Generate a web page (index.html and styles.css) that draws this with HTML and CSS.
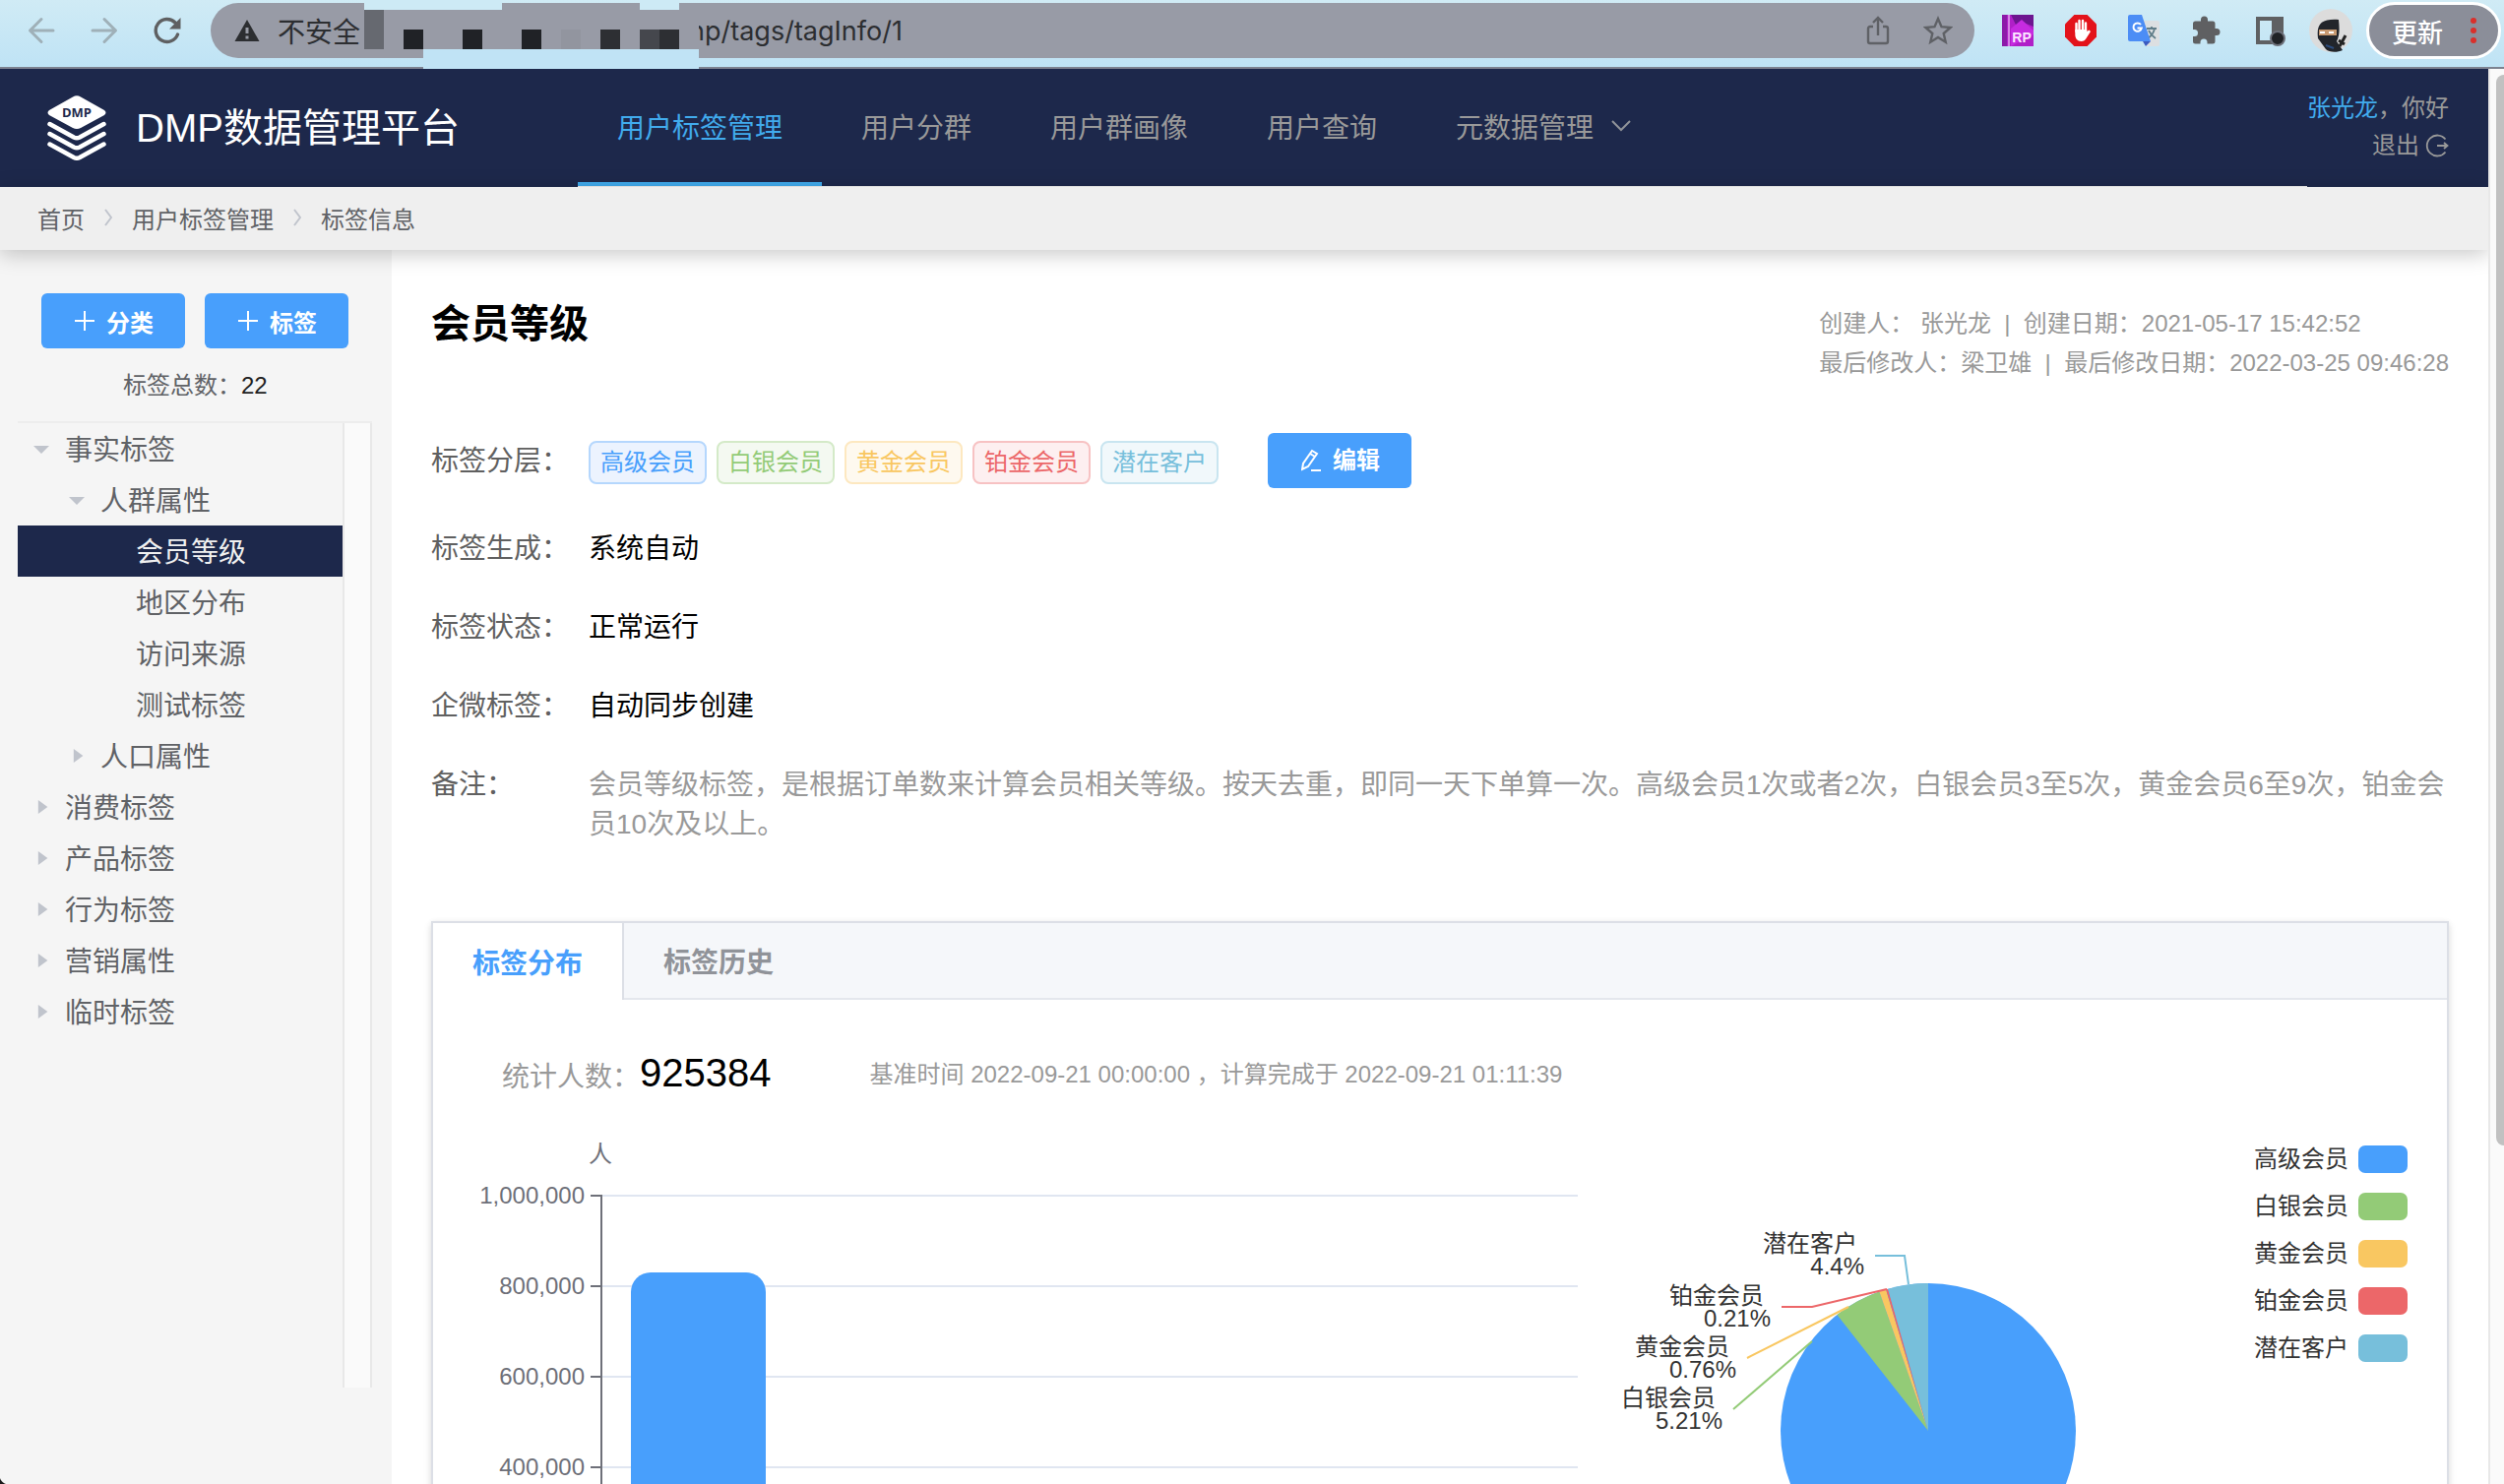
FILE: index.html
```
<!DOCTYPE html>
<html lang="zh-CN">
<head>
<meta charset="utf-8">
<meta name="viewport" content="width=device-width, initial-scale=1">
<title>DMP数据管理平台 - 标签信息</title>
<link rel="stylesheet" href="styles.css">
</head>
<body>
<div class="browser">
  <button class="tool" aria-label="后退"><svg width="28" height="28" viewBox="0 0 28 28" fill="none" stroke="#9fb0b8" stroke-width="3" stroke-linecap="round" stroke-linejoin="round"><path d="M26 14H3M14 2.500L2.500 14L14 25.500"/></svg></button>
  <button class="tool" aria-label="前进"><svg width="28" height="28" viewBox="0 0 28 28" fill="none" stroke="#9fb0b8" stroke-width="3" stroke-linecap="round" stroke-linejoin="round"><path d="M2 14H25M14 2.500L25.500 14L14 25.500"/></svg></button>
  <button class="tool" aria-label="刷新"><svg width="28" height="28" viewBox="0 0 28 28"><path d="M24.500 18A11.500 11.500 0 1 1 22 6" fill="none" stroke="#5f6062" stroke-width="3.400" stroke-linecap="round"/><path d="M27.500 1V12.500H16Z" fill="#5f6062"/></svg></button>
  <div class="omnibox">
    <svg width="26" height="24" viewBox="0 0 26 24"><path d="M13 1L25.500 23H.500Z" fill="#2c2e31"/><path d="M13 9V15M13 17.500V20.500" stroke="#989ba6" stroke-width="3"/></svg>
    <span class="insecure">不安全</span>
    <input class="url" type="text" aria-label="地址" value="np/tags/tagInfo/1">
    <button class="tool" aria-label="分享"><svg width="24" height="30" viewBox="0 0 24 30" fill="none" stroke="#5f6166" stroke-width="2.400"><path d="M7 11H4a2 2 0 0 0-2 2v13a2 2 0 0 0 2 2h16a2 2 0 0 0 2-2V13a2 2 0 0 0-2-2h-3M12 20V2M7 7l5-5 5 5"/></svg></button>
    <button class="tool" aria-label="收藏"><svg width="30" height="30" viewBox="0 0 30 30" fill="none" stroke="#5f6166" stroke-width="2.400"><path d="M15 3l3.500 8.200 9 .800-6.800 6 2 8.700L15 22l-7.700 4.700 2-8.700-6.800-6 9-.800z"/></svg></button>
  </div>
  <div class="extensions">
    <button class="tool" aria-label="RP"><svg width="32" height="32" viewBox="0 0 32 32"><path d="M0 0H32V32H0z" fill="#b01fc8"/><path d="M9 0H32V12L22 8L16 14Z" fill="#6d1590"/><path d="M9 14L20 5L32 16V20L9 32Z" fill="#c62be0"/><path d="M0 0H5V32H0z" fill="#8c1aa8"/><path d="M7 0V32" stroke="#e5a5ef" stroke-width="1.500"/><text class="rp-text" x="20" y="28" text-anchor="middle">RP</text></svg></button>
    <button class="tool" aria-label="广告拦截"><svg width="32" height="32" viewBox="0 0 32 32"><path d="M9.400 0h13.200L32 9.400v13.200L22.600 32H9.400L0 22.600V9.400z" fill="#e3131b"/><path d="M11.500 9v8M14.500 6v11M18 6V17M21 8.500V18" stroke="#fff" stroke-width="2.400" stroke-linecap="round"/><path d="M10.300 15h11.900v2l2.300-1.500 1.500 1.500-4.500 7c-1.200 2-2.500 3-5 3-4 0-6.200-3-6.200-7z" fill="#fff"/></svg></button>
    <button class="tool" aria-label="翻译"><svg width="32" height="32" viewBox="0 0 32 32"><path d="M12 6H30a2 2 0 0 1 2 2V30a2 2 0 0 1-2 2H18z" fill="#dcdfe1"/><path d="M19 14h10M24 12v2M27 14c-1 5-4 8-7 10M21 16c2 4 4 6 7 8" stroke="#607d88" stroke-width="1.800" fill="none"/><path d="M15 27h8l-5 5z" fill="#3a5bc0"/><path d="M2 0H14L23 27H2a2 2 0 0 1-2-2V2a2 2 0 0 1 2-2z" fill="#4c8df5"/><path d="M13 10a4.200 4.200 0 1 0 .800 3.500H9.500" stroke="#fff" stroke-width="2" fill="none"/></svg></button>
    <button class="tool" aria-label="扩展程序"><svg width="32" height="32" viewBox="0 0 32 32"><path d="M10 6.500V5a3.500 3.500 0 0 1 7 0v1.500h5a2.500 2.500 0 0 1 2.500 2.500v5H26a3.500 3.500 0 0 1 0 7h-1.500v6a2.500 2.500 0 0 1-2.500 2.500h-5.500V28a3.500 3.500 0 0 0-7 0v1.500H4.500A2.500 2.500 0 0 1 2 27v-5h1.500a3.500 3.500 0 0 0 0-7H2V9a2.500 2.500 0 0 1 2.500-2.500z" fill="#5f6062"/></svg></button>
    <button class="tool" aria-label="侧边栏"><svg width="32" height="32" viewBox="0 0 32 32"><path d="M4 4H26V28H4z" fill="none" stroke="#5f6062" stroke-width="4"/><path d="M18 2H30V20H18z" fill="#5f6062"/><circle cx="24" cy="24" r="7" fill="#202226" stroke="#6d707a" stroke-width="2"/></svg></button>
    <button class="tool" aria-label="用户"><svg width="44" height="44" viewBox="0 0 44 44"><circle cx="22" cy="22" r="22" fill="#dcdcdc"/><path d="M9 30C7 14 14 10 30 11C31 20 31 27 28 33L34 42C28 45 20 44 17 41z" fill="#22252b"/><path d="M10 21H28V27H10z" fill="#c89a72"/><path d="M11 23h5v2h-5zM20 23h5v2h-5z" fill="#fff"/><path d="M17 37l8 3" stroke="#2b4a7a" stroke-width="2"/><path d="M31 38L37 27M30 32l6 4" stroke="#222" stroke-width="3"/></svg></button>
  </div>
  <button class="update">更新<svg width="6" height="26" viewBox="0 0 6 26" fill="#d9302b"><circle cx="3" cy="3" r="3"/><circle cx="3" cy="13" r="3"/><circle cx="3" cy="23" r="3"/></svg></button>
  <svg class="mosaic" width="340" height="70" viewBox="370 0 340 70">
    <path d="M370 0H510V10H370zM650 0H690V10H650z" fill="#cdeaf5"/>
    <path d="M430 50H710V70H430z" fill="#c0e3f5"/>
    <path d="M690 10H710V50H690z" fill="#989ba6"/>
    <path d="M370 10H390V50H370z" fill="#666970"/>
    <path d="M410 30h20v20h-20zM470 30h20v20h-20zM530 30h20v20h-20z" fill="#202226"/>
    <path d="M610 30h20v20h-20zM670 30h20v20h-20z" fill="#2d2f33"/>
    <path d="M650 30h20v20h-20z" fill="#45474d"/>
    <path d="M570 30h20v20h-20z" fill="#92959f"/>
  </svg>
</div>

<div class="viewport">
<div class="page">
  <header class="header">
    <div class="brand">
      <svg width="60" height="66" viewBox="0 0 60 66"><path d="M26 1.500Q30-.800 34 1.500L58 15Q61 17.500 58 20L34 33Q30 35 26 33L2 20Q-1 17.500 2 15z" fill="#fff"/><g fill="none" stroke="#fff" stroke-width="4.500" stroke-linecap="round" stroke-linejoin="round"><path d="M2.500 29L27 42.500Q30 44 33 42.500L57.500 29M2.500 39L27 52.500Q30 54 33 52.500L57.500 39M2.500 49.500L27 63Q30 64.500 33 63L57.500 49.500"/></g><text class="logo-text" x="30" y="22" text-anchor="middle">DMP</text></svg>
      <span class="brand-name">DMP数据管理平台</span>
    </div>
    <nav class="nav">
      <a class="nav-item active" href="#">用户标签管理</a>
      <a class="nav-item" href="#">用户分群</a>
      <a class="nav-item" href="#">用户群画像</a>
      <a class="nav-item" href="#">用户查询</a>
      <a class="nav-item" href="#">元数据管理<svg width="20" height="12" viewBox="0 0 20 12" fill="none" stroke="#909399" stroke-width="2"><path d="M1 1L10 10L19 1"/></svg></a>
    </nav>
    <div class="user">
      <span><a class="user-name" href="#">张光龙</a>，你好</span>
      <a class="logout" href="#">退出<svg width="24" height="24" viewBox="0 0 24 24" fill="none" stroke="#999" stroke-width="1.800"><path d="M20.500 5.500A10.500 10.500 0 1 0 20.500 18.500M12 12H22M19 9L22.500 12L19 15"/></svg></a>
    </div>
  </header>

  <nav class="crumbs" aria-label="面包屑">
    <a href="#">首页</a>
    <svg width="8" height="18" viewBox="0 0 8 18"><path d="M1 1L7 9L1 17"/></svg>
    <a href="#">用户标签管理</a>
    <svg width="8" height="18" viewBox="0 0 8 18"><path d="M1 1L7 9L1 17"/></svg>
    <a href="#">标签信息</a>
  </nav>

  <div class="columns">
    <aside class="sidebar">
      <div class="actions">
        <button class="btn"><svg width="20" height="20" viewBox="0 0 20 20"><path d="M10 0V20M0 10H20"/></svg>分类</button>
        <button class="btn"><svg width="20" height="20" viewBox="0 0 20 20"><path d="M10 0V20M0 10H20"/></svg>标签</button>
      </div>
      <p class="total">标签总数：<b>22</b></p>
      <div class="tree-box">
        <ul class="tree">
          <li><a class="node open" href="#">事实标签</a>
            <ul>
              <li><a class="node open" href="#">人群属性</a>
                <ul>
                  <li><a class="node current" href="#">会员等级</a></li>
                  <li><a class="node" href="#">地区分布</a></li>
                  <li><a class="node" href="#">访问来源</a></li>
                  <li><a class="node" href="#">测试标签</a></li>
                </ul>
              </li>
              <li><a class="node closed" href="#">人口属性</a></li>
            </ul>
          </li>
          <li><a class="node closed" href="#">消费标签</a></li>
          <li><a class="node closed" href="#">产品标签</a></li>
          <li><a class="node closed" href="#">行为标签</a></li>
          <li><a class="node closed" href="#">营销属性</a></li>
          <li><a class="node closed" href="#">临时标签</a></li>
        </ul>
        <div class="tree-track"></div>
      </div>
    </aside>

    <main class="content">
      <div class="head">
        <h1>会员等级</h1>
        <div class="meta">
          <div>创建人： 张光龙&nbsp; |&nbsp; 创建日期：2021-05-17 15:42:52</div>
          <div>最后修改人：梁卫雄&nbsp; |&nbsp; 最后修改日期：2022-03-25 09:46:28</div>
        </div>
      </div>

      <dl class="info">
        <div class="info-row layered">
          <dt>标签分层：</dt>
          <dd class="tags">
            <span class="tag blue">高级会员</span>
            <span class="tag green">白银会员</span>
            <span class="tag yellow">黄金会员</span>
            <span class="tag red">铂金会员</span>
            <span class="tag cyan">潜在客户</span>
            <button class="btn edit"><svg width="20" height="24" viewBox="0 0 20 24"><path d="M1 21L2 15L11 2L16 5L7 18ZM9 5L14 8M10 22H20"/></svg>编辑</button>
          </dd>
        </div>
        <div class="info-row"><dt>标签生成：</dt><dd>系统自动</dd></div>
        <div class="info-row"><dt>标签状态：</dt><dd>正常运行</dd></div>
        <div class="info-row"><dt>企微标签：</dt><dd>自动同步创建</dd></div>
        <div class="info-row"><dt>备注：</dt><dd class="note">会员等级标签，是根据订单数来计算会员相关等级。按天去重，即同一天下单算一次。高级会员1次或者2次，白银会员3至5次，黄金会员6至9次，铂金会员10次及以上。</dd></div>
      </dl>

      <section class="card">
        <div class="tabs">
          <button class="tab active">标签分布</button>
          <button class="tab">标签历史</button>
        </div>
        <div class="card-body">
          <div class="stats">
            <span class="stats-label">统计人数：</span><strong>925384</strong>
            <span class="stats-time">基准时间 2022-09-21 00:00:00 ，计算完成于 2022-09-21 01:11:39</span>
          </div>
          <div class="charts">
            <svg class="bars" height="600" role="img" aria-label="标签人数柱状图">
              <g stroke="#e0e6f1" stroke-width="2">
                <line x1="132" x2="100%" y1="95" y2="95"/><line x1="132" x2="100%" y1="187" y2="187"/><line x1="132" x2="100%" y1="279" y2="279"/><line x1="132" x2="100%" y1="371" y2="371"/><line x1="132" x2="100%" y1="463" y2="463"/>
              </g>
              <path d="M131 94V555M120 95H131M120 187H131M120 279H131M120 371H131M120 463H131M120 555H131" stroke="#6e7079" stroke-width="2"/>
              <path d="M161 555V193a20 20 0 0 1 20-20H278a20 20 0 0 1 20 20V555z" fill="#489ffc"/>
              <g fill="#6e7079" text-anchor="end">
                <text x="142" y="61">人</text>
                <text x="114" y="103">1,000,000</text><text x="114" y="195">800,000</text><text x="114" y="287">600,000</text><text x="114" y="379">400,000</text>
              </g>
            </svg>
            <svg class="pie" width="687" height="600" role="img" aria-label="标签占比饼图">
              <circle cx="356" cy="334" r="150" fill="#489ffc"/>
              <path d="M356 334L263.400 216A150 150 0 0 1 306.300 192.400z" fill="#93cb77"/>
              <path d="M356 334L306.300 192.400A150 150 0 0 1 313.100 190.300z" fill="#f9c761"/>
              <path d="M356 334L313.100 190.300A150 150 0 0 1 315.100 189.700z" fill="#ec6769"/>
              <path d="M356 334L315.100 189.700A150 150 0 0 1 356 184z" fill="#77bfdb"/>
              <g fill="none" stroke-width="2">
                <path d="M302 156H332L336 185" stroke="#77bfdb"/>
                <path d="M207 208H238L314 190" stroke="#ec6769"/>
                <path d="M172 260L275 208" stroke="#f9c761"/>
                <path d="M158 312L238 243" stroke="#93cb77"/>
              </g>
              <g fill="#333" text-anchor="end">
                <text x="284" y="152">潜在客户</text><text x="291" y="175">4.4%</text>
                <text x="189" y="205">铂金会员</text><text x="196" y="228">0.21%</text>
                <text x="154" y="257">黄金会员</text><text x="161" y="280">0.76%</text>
                <text x="140" y="309">白银会员</text><text x="147" y="332">5.21%</text>
              </g>
            </svg>
            <ul class="legend">
              <li>高级会员<i class="swatch s-blue"></i></li>
              <li>白银会员<i class="swatch s-green"></i></li>
              <li>黄金会员<i class="swatch s-yellow"></i></li>
              <li>铂金会员<i class="swatch s-red"></i></li>
              <li>潜在客户<i class="swatch s-cyan"></i></li>
            </ul>
          </div>
        </div>
      </section>
    </main>
  </div>
</div>
<div class="scrollbar"><div class="thumb"></div></div>
</div>
<div class="window-corner"></div>
</body>
</html>
```
FILE: styles.css
```
* { box-sizing: border-box; }

body {
  margin: 0;
  height: 100vh;
  overflow: hidden;
  display: flex;
  flex-direction: column;
  font-family: "Liberation Sans", "Noto Sans CJK SC", sans-serif;
  font-size: 28px;
  color: #606266;
  background: #fff;
}

button, input { font: inherit; color: inherit; border: 0; margin: 0; padding: 0; background: none; }
button { cursor: pointer; }
a { color: inherit; text-decoration: none; }
ul, dl, dd, p, h1 { margin: 0; padding: 0; }
ul { list-style: none; }
svg { flex: none; }

/* Browser toolbar */
.browser {
  position: relative;
  flex: none;
  display: flex;
  align-items: center;
  height: 70px;
  padding: 0 3px 6px 28px;
  gap: 36px;
  border-bottom: 2px solid #7d8290;
  background: linear-gradient(#d0ebf5, #bfe3f5);
}
.tool { display: flex; flex: none; align-items: center; justify-content: center; }
.rp-text { font-size: 14px; font-weight: 700; fill: #fbe6ff; }
.omnibox {
  flex: 1;
  display: flex;
  align-items: center;
  height: 56px;
  margin-left: -6px;
  padding: 0 22px 0 24px;
  gap: 34px;
  border-radius: 28px;
  background: #989ba6;
  color: #2c2e31;
}
.insecure { width: 84px; margin-left: -16px; white-space: nowrap; }
.url { flex: 1; min-width: 0; margin-left: 300px; font-family: Inter, sans-serif; font-size: 27px; height: 40px; }
.extensions { display: flex; align-items: center; gap: 32px; margin-left: -8px; }
.extensions .tool:last-child { margin-left: -8px; }
.update {
  display: flex;
  align-items: center;
  gap: 28px;
  height: 58px;
  margin-left: -22px;
  padding: 0 22px 0 23px;
  border: 3px solid #fff;
  border-radius: 29px;
  background: #8b8e99;
  color: #fff;
  font-size: 26px;
  font-weight: 500;
}
.mosaic { position: absolute; left: 370px; top: 0; }

/* Page frame */
.viewport { flex: 1; min-height: 0; display: flex; }
.page { flex: 1; min-width: 0; display: flex; flex-direction: column; overflow: hidden; }
.scrollbar { width: 16px; padding: 6px 0 0 6px; border-left: 2px solid #e8e8e8; background: #fafafa; }
.thumb { height: 76%; border-radius: 8px 0 0 8px; background: #c1c1c1; }
.window-corner {
  position: fixed;
  left: 0;
  bottom: 0;
  width: 9px;
  height: 9px;
  background: radial-gradient(circle at 100% 0, transparent 9px, #1a1a1a 10px);
}

/* Header */
.header { flex: none; display: flex; height: 120px; background: #1d284b; color: #999; }
.brand { display: flex; align-items: center; gap: 30px; width: 587px; padding-left: 48px; }
.brand-name { padding-bottom: 6px; color: #fff; font-size: 40px; white-space: nowrap; }
.logo-text { font-family: "Open Sans", sans-serif; font-size: 13px; font-weight: 700; fill: #1d284b; }
.nav { flex: 1; display: flex; border-bottom: 1px solid #efefef; }
.nav-item { display: flex; align-items: center; gap: 18px; padding: 0 40px; white-space: nowrap; border-bottom: 4px solid transparent; }
.nav-item.active { color: #41abed; border-bottom-color: #41abed; }
.user {
  display: flex;
  flex-direction: column;
  align-items: flex-end;
  padding: 21px 40px 0 0;
  font-size: 24px;
  line-height: 38px;
}
.user-name { color: #41abed; }
.logout { display: flex; align-items: center; gap: 6px; }

/* Breadcrumb */
.crumbs {
  position: relative;
  z-index: 1;
  flex: none;
  display: flex;
  align-items: center;
  gap: 20px;
  height: 64px;
  padding: 0 38px 2px;
  background: #efefef;
  box-shadow: 0 4px 20px rgba(0, 0, 0, .22);
  font-size: 24px;
}
.crumbs svg { fill: none; stroke: #c0c4cc; stroke-width: 2; }

.columns { flex: 1; min-height: 0; display: flex; }

/* Sidebar */
.sidebar { flex: none; width: 398px; padding: 44px 20px 0 18px; background: #f5f5f5; }
.actions { display: flex; gap: 20px; padding-left: 24px; }
.btn {
  display: flex;
  align-items: center;
  justify-content: center;
  gap: 12px;
  width: 146px;
  height: 56px;
  padding-left: 2px;
  border-radius: 6px;
  background: #489ffc;
  color: #fff;
  font-size: 24px;
  font-weight: 700;
}
.btn svg { fill: none; stroke: #fff; stroke-width: 2; }
.total { margin-top: 18px; height: 56px; padding-left: 107px; font-size: 24px; line-height: 40px; }
.total b { color: #222; font-weight: 400; }
.tree-box { display: flex; width: 360px; height: 982px; border-top: 2px solid #ededed; }
.tree { flex: 1; }
.tree-track { width: 30px; border: solid #e8e8e8; border-width: 0 2px; background: #fafafa; }
.node { display: flex; align-items: center; height: 52px; padding: 0 0 2px 16px; }
.node::before { content: ""; width: 16px; margin-right: 16px; }
.tree ul .node { padding-left: 52px; }
.tree ul ul .node { padding-left: 88px; }
.node.open::before { height: 8px; margin-top: 4px; background: #c0c4cc; clip-path: polygon(0 0, 100% 0, 50% 100%); }
.node.closed::before { height: 14px; margin-top: 2px; background: #c0c4cc; clip-path: polygon(30% 0, 90% 50%, 30% 100%); }
.node.current { background: #1d284b; color: #f0f0f0; }

/* Tag details */
.content { flex: 1; min-width: 0; padding: 54px 40px 0; overflow: hidden; background: #fff; }
.head { display: flex; justify-content: space-between; height: 80px; }
h1 { font-size: 40px; line-height: 42px; color: #000; }
.meta { padding-top: 1px; font-size: 24px; line-height: 40px; color: #999; }
.info { display: flex; flex-direction: column; gap: 38px; margin-top: 52px; line-height: 40px; }
.info-row { display: flex; }
.info-row dt { flex: none; width: 160px; padding-top: 2px; color: #606060; }
.info-row dd { padding-top: 2px; color: #000; }
.info-row .note { color: #999; }
.info-row.layered { align-items: center; margin-bottom: 2px; }
.info-row .tags { display: flex; align-items: center; gap: 10px; padding-top: 0; }
.tag {
  height: 44px;
  margin-top: 4px;
  padding: 0 10px;
  border: 2px solid;
  border-radius: 8px;
  font-size: 24px;
  line-height: 40px;
}
.tag.blue { color: #489ffc; background: #ecf3fe; border-color: #b5d7fd; }
.tag.green { color: #93cb77; background: #f4f9f1; border-color: #d4eac8; }
.tag.yellow { color: #f9c761; background: #fef9ef; border-color: #fde8c0; }
.tag.red { color: #ec6769; background: #fdeff0; border-color: #f7c2c3; }
.tag.cyan { color: #77bfdb; background: #f1f8fb; border-color: #c9e5f0; }
.edit { margin-left: 40px; }

/* Chart card */
.card {
  margin-top: 78px;
  border: 2px solid #dcdfe6;
  box-shadow: 0 4px 8px rgba(0, 0, 0, .12), 0 0 6px rgba(0, 0, 0, .04);
}
.tabs { display: flex; height: 78px; background: #f5f7fa; border-bottom: 2px solid #e4e7ed; }
.tab { padding: 0 40px; color: #909399; font-weight: 700; }
.tab.active { height: 78px; background: #fff; color: #489ffc; border-right: 2px solid #dcdfe6; }
.card-body { padding: 44px 40px 0; }
.stats { display: flex; align-items: center; height: 60px; padding-left: 30px; color: #999; }
.stats-label { padding-top: 4px; }
.stats strong { font-size: 40px; font-weight: 400; color: #000; }
.stats-time { margin-left: 100px; padding-bottom: 2px; font-size: 24px; }
.charts { display: flex; font-size: 24px; }
.bars { flex: 1; min-width: 0; }
.legend { display: flex; flex-direction: column; gap: 20px; padding-top: 44px; line-height: 28px; color: #333; }
.legend li { display: flex; gap: 10px; white-space: nowrap; }
.swatch { width: 50px; height: 28px; border-radius: 7px; }
.s-blue { background: #489ffc; }
.s-green { background: #93cb77; }
.s-yellow { background: #f9c761; }
.s-red { background: #ec6769; }
.s-cyan { background: #77bfdb; }
```
